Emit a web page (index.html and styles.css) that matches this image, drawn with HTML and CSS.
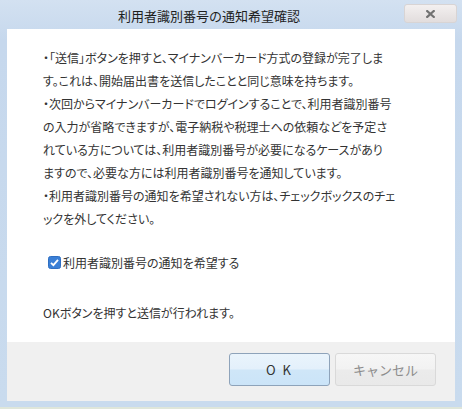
FILE: index.html
```html
<!DOCTYPE html>
<html lang="ja">

<head>
    <meta charset="UTF-8">
    <meta name="viewport" content="width=device-width, initial-scale=1.0">
    <title>利用者識別番号の通知希望確認</title>
    <link rel="stylesheet" href="styles.css">
</head>

<body>
    <div class="dialog">
        <div class="titlebar">
            <span class="title">利用者識別番号の通知希望確認</span>
            <button class="close" aria-label="閉じる">
                <svg width="9" height="8" viewBox="0 0 9 8">
                    <path d="M1.2 1 L7.8 7 M7.8 1 L1.2 7" stroke="#727272" stroke-width="2.2" stroke-linecap="square" />
                </svg>
            </button>
        </div>

        <div class="content">
            <p class="message">
                ・「送信」ボタンを押すと、マイナンバーカード方式の登録が完了しま<br>
                す。これは、開始届出書を送信したことと同じ意味を持ちます。<br>
                ・次回からマイナンバーカードでログインすることで、利用者識別番号<br>
                の入力が省略できますが、電子納税や税理士への依頼などを予定さ<br>
                れている方については、利用者識別番号が必要になるケースがあり<br>
                ますので、必要な方には利用者識別番号を通知しています。<br>
                ・利用者識別番号の通知を希望されない方は、チェックボックスのチェ<br>
                ックを外してください。
            </p>

            <label class="check">
                <span class="checkbox">
                    <svg width="13" height="13" viewBox="0 0 13 13">
                        <rect x="0.5" y="0.5" width="12" height="12" rx="2" fill="#3a7fd6" stroke="#2f6fc2" />
                        <path d="M3 6.8 L5.4 9.2 L10 3.8" fill="none" stroke="#ffffff" stroke-width="1.8" />
                    </svg>
                </span>
                利用者識別番号の通知を希望する
            </label>

            <p class="note">OKボタンを押すと送信が行われます。</p>
        </div>

        <div class="footer">
            <button class="btn btn-ok">O K</button>
            <button class="btn btn-cancel">キャンセル</button>
        </div>
    </div>
    <div class="page-edge"></div>
</body>

</html>
```

FILE: styles.css
```css
body {
    margin: 0;
    background-color: #c9dbee;
    font-family: "Noto Sans CJK JP", "Noto Sans", sans-serif;
    color: #333333;
}

.dialog {
    padding: 0 7px 6px 7px;
    background: linear-gradient(#d3e1f1, #c6d8ed 40px, #c9dbee);
}

.titlebar {
    display: flex;
    align-items: flex-start;
    height: 29px;
}

.title {
    flex: 1;
    padding-left: 7px;
    text-align: center;
    font-size: 13px;
    line-height: 32px;
    color: #1e1e1e;
}

.close {
    width: 53px;
    height: 19px;
    margin-top: 4px;
    margin-right: -2px;
    padding: 0;
    border: 1px solid #d8d4d4;
    border-radius: 3px;
    background: linear-gradient(#f3f0f0, #e2dddd);
    display: flex;
    align-items: center;
    justify-content: center;
}

.content {
    background: #ffffff;
    padding: 17px 20px 16px 36px;
    height: 280px;
}

.message {
    margin: 0;
    font-size: 12px;
    line-height: 23px;
    white-space: nowrap;
    font-feature-settings: "palt";
}

.check {
    display: flex;
    align-items: center;
    margin-top: 21px;
    padding-left: 5px;
    font-size: 12px;
    line-height: 23px;
    font-feature-settings: "palt";
}

.checkbox {
    display: flex;
    margin-right: 2px;
}

.note {
    margin: 27px 0 0 0;
    font-size: 12px;
    line-height: 23px;
    font-feature-settings: "palt";
}

.footer {
    display: flex;
    justify-content: flex-end;
    gap: 5px;
    height: 59px;
    padding: 11px 19px 0 0;
    box-sizing: border-box;
    background: #f0f0f0;
}

.btn {
    width: 101px;
    height: 33px;
    border-radius: 3px;
    font-family: "Noto Sans CJK JP", "Noto Sans", sans-serif;
    font-size: 13px;
}

.btn-ok {
    border: 1px solid #8ea3ba;
    background: linear-gradient(#eaf4fc 0%, #e3f0fb 48%, #cfe6f8 52%, #cbe4f8 100%);
    color: #333333;
    letter-spacing: 2px;
}

.btn-cancel {
    border: 1px solid #d9d9d9;
    background: linear-gradient(#f6f6f6 0%, #f2f2f2 48%, #ebebeb 52%, #e9e9e9 100%);
    color: #8c8c8c;
}

.page-edge {
    height: 2px;
    background: #dfe6da;
}
```
